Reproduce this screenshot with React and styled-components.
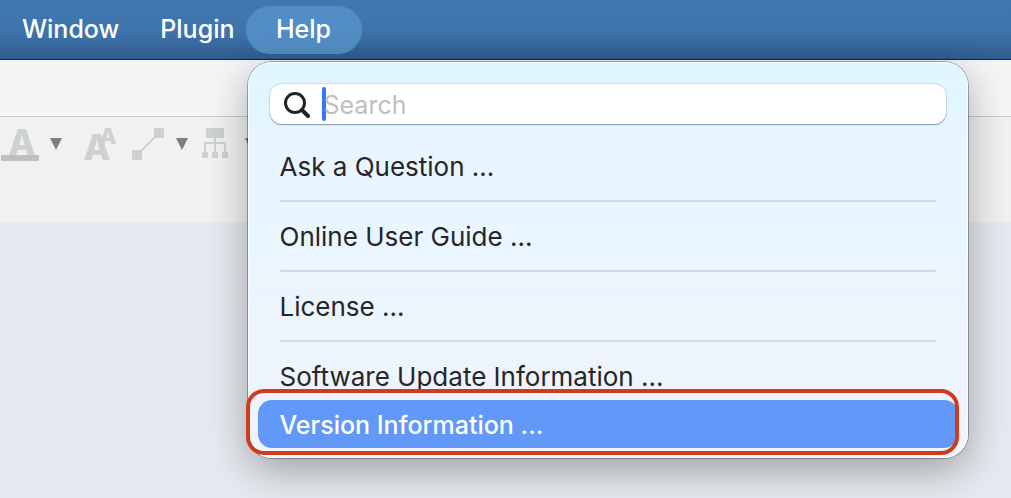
import styled, { createGlobalStyle } from "styled-components";

const GlobalStyle = createGlobalStyle`
*{
box-sizing:border-box;
}
body{
margin:0;
font-family:Inter, "Liberation Sans", sans-serif;
}
button{
font:inherit;
border:none;
background:none;
padding:0;
cursor:pointer;
}
`;
const Page = styled.div`
min-height:100vh;
background:#e6e9ef;
overflow:hidden;
`;
const MenuBar = styled.nav`
display:flex;
align-items:center;
height:60px;
padding-left:22px;
background:linear-gradient(#3f77b1 0%, #3e74ab 55%, #2f5c8c 100%);
border-bottom:1px solid #10263e;
`;
const BarItem = styled.button`
height:48px;
padding-bottom:2px;
color:white;
font-size:25px;
font-weight:500;
margin-right:${(props) => props.$gap || 0}px;
`;
const OpenItem = styled(BarItem)`
width:116px;
border-radius:24px;
background:#538dc5;
`;
const HelpWrapper = styled.div`
position:relative;
`;
const Dropdown = styled.div`
position:absolute;
z-index:2;
top:56px;
left:2px;
width:720px;
padding:22px 10px 10px;
border-radius:24px;
background:linear-gradient(#dff6ff 0%, #e6f5ff 18%, #eaf6ff 48%, #edf4fe 65%, #f0f5fd 100%);
box-shadow:0 0 0 1px rgba(0,0,0,0.3), inset 0 0 0 1px rgba(255,255,255,0.7), 0 12px 40px rgba(0,0,0,0.32);
`;
const SearchBox = styled.label`
display:flex;
align-items:center;
height:40px;
margin:0 12px 18px;
padding-left:13px;
border-radius:12px;
background:white;
box-shadow:0 0 1px 1px rgba(90,120,150,0.18), 0 1px 1px rgba(0,0,0,0.35);
`;
const Caret = styled.span`
width:4px;
height:34px;
margin:0 -2px 0 11px;
border-radius:2px;
background:#3478f6;
`;
const SearchInput = styled.input`
flex:1;
min-width:0;
padding:2px 0 0;
border:none;
outline:none;
background:none;
font-family:inherit;
font-size:25px;
color:#262626;
caret-color:transparent;
&::placeholder{
color:#bfbfbf;
opacity:1;
}
`;
const MenuItem = styled.button`
display:block;
width:100%;
height:48px;
padding:2px 22px 0;
border-radius:14px;
text-align:left;
font-size:${(props) => (props.$active ? 25 : 26)}px;
white-space:nowrap;
color:${(props) => (props.$active ? "white" : "#262626")};
font-weight:${(props) => (props.$active ? 500 : 400)};
background:${(props) => (props.$active ? "#6299f8" : "none")};
`;
const Separator = styled.hr`
height:2px;
margin:10px 22px;
border:none;
background:#d2dbe4;
`;
const ActiveRow = styled.div`
position:relative;
`;
const Marker = styled.div`
position:absolute;
inset:-11px -1px -7px -12px;
border:4px solid #d23a1f;
border-radius:18px;
pointer-events:none;
`;
const TitleStrip = styled.div`
height:57px;
background:#f4f5f7;
border-bottom:1px solid #c9cbcd;
`;
const Toolbar = styled.div`
display:flex;
align-items:flex-start;
height:105px;
background:#f1f1f1;
`;
const Tool = styled.button`
display:flex;
margin-right:${(props) => props.$gap}px;
svg{
display:block;
fill:#cdd1d0;
stroke:none;
}
text{
font-family:Inter, sans-serif;
font-weight:800;
}
`;
const Arrow = styled(Tool)`
padding-top:21px;
svg{
fill:#7d7f80;
}
`;

const items = ["Ask a Question ...", "Online User Guide ...", "License ..."];

const ArrowButton = ({ gap, label }) => (
    <Arrow $gap={gap} aria-label={label}>
        <svg width="12" height="12" viewBox="0 0 12 12"><path d="M0 0H12L6 12Z" /></svg>
    </Arrow>
);

const HelpMenu = () => {
    return <Dropdown>
        <SearchBox>
            <svg width="28" height="28" viewBox="0 0 28 28" fill="none" stroke="#222" strokeLinecap="round" aria-hidden="true">
                <circle cx="12" cy="13" r="9.5" strokeWidth="3" />
                <path d="M19 20L25 26" strokeWidth="4" />
            </svg>
            <Caret />
            <SearchInput type="text" placeholder="Search" aria-label="Search" />
        </SearchBox>
        {items.map((item) => (
            <div key={item}>
                <MenuItem>{item}</MenuItem>
                <Separator />
            </div>
        ))}
        <MenuItem>Software Update Information ...</MenuItem>
        <ActiveRow>
            <MenuItem $active>Version Information ...</MenuItem>
            <Marker />
        </ActiveRow>
    </Dropdown>;
}

const App = () => {
    return <Page>
        <GlobalStyle />
        <MenuBar>
            <BarItem $gap={41}>Window</BarItem>
            <BarItem $gap={11}>Plugin</BarItem>
            <HelpWrapper>
                <OpenItem>Help</OpenItem>
                <HelpMenu />
            </HelpWrapper>
        </MenuBar>
        <TitleStrip />
        <Toolbar>
            <Tool $gap={11} aria-label="Font color">
                <svg width="39" height="56" viewBox="0 -10 39 56">
                    <text x="22" y="28" fontSize="35" textAnchor="middle">A</text>
                    <rect x="1" y="28" width="38" height="6" fill="#bfbfbf" />
                </svg>
            </Tool>
            <ArrowButton gap={21} label="Font color options" />
            <Tool $gap={15} aria-label="Font size">
                <svg width="34" height="56" viewBox="0 -10 34 56">
                    <text x="14" y="33" fontSize="35" textAnchor="middle">A</text>
                    <text x="25" y="17" fontSize="22" textAnchor="middle">A</text>
                </svg>
            </Tool>
            <Tool $gap={12} aria-label="Connector">
                <svg width="32" height="56" viewBox="0 -10 32 56">
                    <rect x="22" y="1" width="10" height="10" />
                    <rect x="0" y="23" width="10" height="10" />
                    <path d="M7 26L25 8" stroke="#cdd1d0" strokeWidth="2" />
                </svg>
            </Tool>
            <ArrowButton gap={14} label="Connector options" />
            <Tool $gap={17} aria-label="Layout">
                <svg width="26" height="56" viewBox="0 -10 26 56">
                    <path d="M4 1H22V11H14V15H24V25H26V31H20V25H22V17H14V25H16V31H10V25H12V17H4V25H6V31H0V25H2V15H12V11H4Z" />
                </svg>
            </Tool>
            <ArrowButton gap={0} label="Layout options" />
        </Toolbar>
    </Page>;
}
export default App
